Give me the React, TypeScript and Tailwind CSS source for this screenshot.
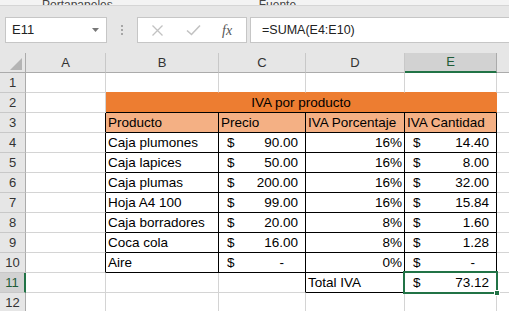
import React from 'react'

type Cell = { text?: string; kind?: 'text' | 'money' | 'pct' | 'dash' }

const FONT = "font-['Liberation_Sans',Arial,sans-serif]"
const GRID = 'grid grid-cols-[26px_80px_113px_87px_99px_92px_1fr]'

// column index: 0 = A, 1 = B ... 5 = F
const rowsData: Record<number, Record<number, Cell>> = {
  3: {
    1: { text: 'Producto' },
    2: { text: 'Precio' },
    3: { text: 'IVA Porcentaje' },
    4: { text: 'IVA Cantidad' },
  },
  4: { 1: { text: 'Caja plumones' }, 2: { kind: 'money', text: '90.00' }, 3: { kind: 'pct', text: '16%' }, 4: { kind: 'money', text: '14.40' } },
  5: { 1: { text: 'Caja lapices' }, 2: { kind: 'money', text: '50.00' }, 3: { kind: 'pct', text: '16%' }, 4: { kind: 'money', text: '8.00' } },
  6: { 1: { text: 'Caja plumas' }, 2: { kind: 'money', text: '200.00' }, 3: { kind: 'pct', text: '16%' }, 4: { kind: 'money', text: '32.00' } },
  7: { 1: { text: 'Hoja A4 100' }, 2: { kind: 'money', text: '99.00' }, 3: { kind: 'pct', text: '16%' }, 4: { kind: 'money', text: '15.84' } },
  8: { 1: { text: 'Caja borradores' }, 2: { kind: 'money', text: '20.00' }, 3: { kind: 'pct', text: '8%' }, 4: { kind: 'money', text: '1.60' } },
  9: { 1: { text: 'Coca cola' }, 2: { kind: 'money', text: '16.00' }, 3: { kind: 'pct', text: '8%' }, 4: { kind: 'money', text: '1.28' } },
  10: { 1: { text: 'Aire' }, 2: { kind: 'dash' }, 3: { kind: 'pct', text: '0%' }, 4: { kind: 'dash' } },
  11: { 3: { text: 'Total IVA' }, 4: { kind: 'money', text: '73.12' } },
}

// cells that carry a black border on all sides
const boxed = (r: number, c: number) =>
  (r >= 3 && r <= 10 && c >= 1 && c <= 4) || (r === 11 && (c === 3 || c === 4))

const CellBody = ({ cell }: { cell?: Cell }) => {
  if (!cell) return null
  if (cell.kind === 'money' || cell.kind === 'dash') {
    return (
      <div className="flex h-full items-center justify-between pl-[8px] pr-[7px] pt-[1px]">
        <span>$</span>
        <span className={cell.kind === 'dash' ? 'pr-[14px]' : ''}>{cell.kind === 'dash' ? '-' : cell.text}</span>
      </div>
    )
  }
  if (cell.kind === 'pct') {
    return <div className="flex h-full items-center justify-end pr-[2px] pt-[1px]">{cell.text}</div>
  }
  return <div className="flex h-full items-center pl-[2px] pt-[1px] whitespace-nowrap">{cell.text}</div>
}

const ColHeader = ({ label, active }: { label: string; active?: boolean }) => (
  <div
    className={
      active
        ? 'flex h-[20px] items-center justify-center border-r border-r-[#ababab] border-b-2 border-b-[#217346] bg-[#d2d2d2] text-[#1f5c38]'
        : 'flex h-[20px] items-center justify-center border-r border-r-[#c8c8c8] border-b border-b-[#ababab] text-[#333]'
    }
  >
    {label}
  </div>
)

const Launcher = () => (
  <svg width="8" height="6" viewBox="0 0 8 6" className="shrink-0">
    <path d="M0.5 0 V1.5 H7.5 V0" stroke="#666" fill="none" />
  </svg>
)

export default function App() {
  const rows = Array.from({ length: 12 }, (_, i) => i + 1)
  const cols = [0, 1, 2, 3, 4, 5]

  return (
    <div className={`h-[311px] w-[509px] overflow-hidden bg-[#e6e6e6] ${FONT}`}>
      {/* ribbon leftovers */}
      <div className="flex h-[6px] items-end overflow-hidden border-b border-[#d5d5d5] bg-[#f3f3f3] text-[12px] text-[#444]">
        <div className="flex w-full items-end leading-[14px]">
          <span className="ml-[42px] -mb-[7px]">Portapapeles</span>
          <span className="ml-[46px] mb-[1px]"><Launcher /></span>
          <span className="ml-[92px] -mb-[7px]">Fuente</span>
          <span className="ml-[90px] mb-[1px]"><Launcher /></span>
          <span className="ml-[112px] mb-[1px]"><Launcher /></span>
        </div>
      </div>

      {/* formula bar */}
      <div className="mt-[11px] flex h-[26px] items-stretch">
        <div className="ml-[5px] flex w-[102px] items-center justify-between border border-[#c6c6c6] bg-white pl-[6px] pr-[7px] text-[13px] text-[#222]">
          <span>E11</span>
          <svg width="7" height="4" viewBox="0 0 7 4">
            <path d="M0 0 H7 L3.5 4 Z" fill="#777" />
          </svg>
        </div>
        <div className="flex w-[30px] flex-col items-center justify-center gap-[2px]">
          <div className="h-[2px] w-[2px] bg-[#a6a6a6]" />
          <div className="h-[2px] w-[2px] bg-[#a6a6a6]" />
          <div className="h-[2px] w-[2px] bg-[#a6a6a6]" />
        </div>
        <div className="flex w-[110px] items-center border border-[#c6c6c6] bg-white">
          <svg width="13" height="13" viewBox="0 0 13 13" className="ml-[13px]">
            <path d="M1.5 1.5 L11.5 11.5 M11.5 1.5 L1.5 11.5" stroke="#c2c2c2" strokeWidth="1.3" />
          </svg>
          <svg width="15" height="12" viewBox="0 0 15 12" className="ml-[22px]">
            <path d="M1 6.5 L5.5 10.5 L14 1.5" stroke="#c2c2c2" strokeWidth="1.6" fill="none" />
          </svg>
          <span className="ml-[21px] font-['Liberation_Serif',serif] text-[14px] italic text-[#555]">fx</span>
        </div>
        <div className="ml-[3px] flex flex-1 items-center border border-r-0 border-[#c6c6c6] bg-white pl-[11px] text-[12.5px] text-[#222]">
          =SUMA(E4:E10)
        </div>
      </div>

      {/* sheet */}
      <div className="mt-[10px] bg-white text-[13.5px] text-black">
        {/* column headers */}
        <div className={`${GRID} bg-[#e6e6e6] text-[13px]`}>
          <div className="flex h-[20px] items-end justify-end border-r border-r-[#ababab] border-b border-b-[#ababab] pb-[2px] pr-[3px]">
            <svg width="12" height="12" viewBox="0 0 12 12">
              <path d="M12 0 V12 H0 Z" fill="#b4b4b4" />
            </svg>
          </div>
          <ColHeader label="A" />
          <ColHeader label="B" />
          <ColHeader label="C" />
          <ColHeader label="D" />
          <ColHeader label="E" active />
          <div className="h-[20px] border-b border-b-[#ababab]" />
        </div>

        {rows.map((r) => (
          <div key={r} className={GRID}>
            <div
              className={
                r === 11
                  ? 'flex h-[20px] items-center justify-center border-r-2 border-r-[#217346] border-b border-b-[#c8c8c8] bg-[#d2d2d2] text-[13px] text-[#1f5c38]'
                  : 'flex h-[20px] items-center justify-center border-r border-r-[#ababab] border-b border-b-[#c8c8c8] bg-[#e6e6e6] text-[13px] text-[#333]'
              }
            >
              {r}
            </div>

            {r === 2 ? (
              <>
                <div className="h-[20px] border-r border-b border-r-[#d4d4d4] border-b-[#d4d4d4]" />
                <div className="col-span-4 flex h-[20px] items-center justify-center border-r border-r-[#ed7d31] border-b border-b-black bg-[#ed7d31] pt-[1px]">
                  IVA por producto
                </div>
                <div className="h-[20px] border-b border-b-[#d4d4d4]" />
              </>
            ) : (
              cols.map((c) => {
                const rightBlack = boxed(r, c) || boxed(r, c + 1)
                const bottomBlack = boxed(r, c) || boxed(r + 1, c)
                const bottomOrange = r === 1 && c >= 1 && c <= 4
                const selected = r === 11 && c === 4
                return (
                  <div
                    key={c}
                    className={[
                      'relative h-[20px] border-b',
                      c === 5 ? 'border-r-0' : 'border-r',
                      rightBlack ? 'border-r-black' : 'border-r-[#d4d4d4]',
                      bottomOrange ? 'border-b-[#ed7d31]' : bottomBlack ? 'border-b-black' : 'border-b-[#d4d4d4]',
                      r === 3 && c >= 1 && c <= 4 ? 'bg-[#f4b084]' : '',
                    ].join(' ')}
                  >
                    <CellBody cell={rowsData[r]?.[c]} />
                    {selected && (
                      <div className="absolute -top-[2px] -left-[2px] -right-[2px] -bottom-[2px] z-10 border-2 border-[#217346]">
                        <div className="absolute -right-[4px] -bottom-[4px] h-[6px] w-[6px] border border-white bg-[#217346]" />
                      </div>
                    )}
                  </div>
                )
              })
            )}
          </div>
        ))}
      </div>
    </div>
  )
}
